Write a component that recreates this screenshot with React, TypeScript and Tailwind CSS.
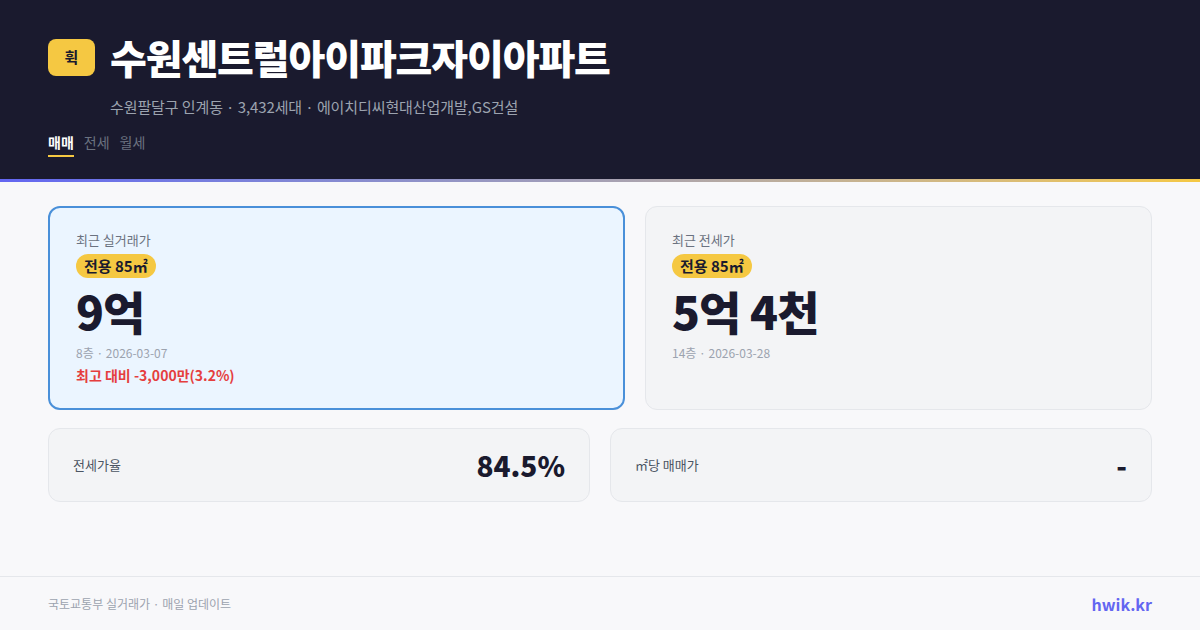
import React from 'react';

const font = { fontFamily: '"Noto Sans CJK KR", "Noto Sans", sans-serif' };

const tabs = ['매매', '전세', '월세'];

const App: React.FC = () => {
    return (
        <div className="w-[1200px] h-[630px] bg-[#f8f8fa] flex flex-col overflow-hidden" style={font}>
            {/* Header */}
            <header className="bg-[#1a1a2e] px-12 pt-[32px] h-[179px] shrink-0">
                <div className="flex items-center gap-[15px]">
                    <div className="w-[47px] h-[37px] rounded-[8px] bg-[#f5c842] flex items-center justify-center text-[15px] font-bold text-[#1a1a2e]">
                        휙
                    </div>
                    <h1 className="text-[40px] leading-[50px] font-extrabold text-white tracking-[-1.1px]">
                        수원센트럴아이파크자이아파트
                    </h1>
                </div>
                <div className="pl-[62px] mt-[14px] text-[15px] leading-[22px] text-[#9ca3af] tracking-[-0.1px]">
                    수원팔달구 인계동 · 3,432세대 · 에이치디씨현대산업개발,GS건설
                </div>
                <div className="flex gap-[10px] mt-[14px] text-[14px] leading-[20px]">
                    {tabs.map((t, i) => (
                        <div
                            key={t}
                            className={`pb-[3px] border-b-2 ${i === 0 ? 'text-white font-bold border-[#f5c842]' : 'text-[#6b7280] border-transparent'}`}
                        >
                            {t}
                        </div>
                    ))}
                </div>
            </header>
            <div className="h-[3px] shrink-0 bg-gradient-to-r from-[#6366f1] to-[#f5c842]" />

            {/* Body */}
            <main className="flex-1 px-12 pt-[24px]">
                <div className="grid grid-cols-[577px_507px] gap-5">
                    <div className="h-[204px] rounded-[12px] border-2 border-[#4a90d9] bg-[#ebf5ff] px-[26px] pt-[23px]">
                        <div className="text-[13px] text-[#6b7280] leading-[18px]">최근 실거래가</div>
                        <span className="inline-block mt-[5px] rounded-full bg-[#f5c842] px-[8px] text-[15px] leading-[24px] font-bold text-[#1a1a2e]">전용 85㎡</span>
                        <div className="text-[46px] leading-[64px] font-black text-[#1a1a2e] tracking-[-0.02em]">9억</div>
                        <div className="text-[12px] text-[#9ca3af] leading-[18px] mt-[2px]">8층 · 2026-03-07</div>
                        <div className="text-[14px] text-[#e53e3e] font-semibold leading-[22px] mt-[2px]">최고 대비 -3,000만(3.2%)</div>
                    </div>
                    <div className="h-[204px] rounded-[12px] border border-[#e5e7eb] bg-[#f3f4f6] px-[26px] pt-[24px]">
                        <div className="text-[13px] text-[#6b7280] leading-[18px]">최근 전세가</div>
                        <span className="inline-block mt-[5px] rounded-full bg-[#f5c842] px-[8px] text-[15px] leading-[24px] font-bold text-[#1a1a2e]">전용 85㎡</span>
                        <div className="text-[46px] leading-[64px] font-black text-[#1a1a2e] tracking-[-0.02em]">5억 4천</div>
                        <div className="text-[12px] text-[#9ca3af] leading-[18px] mt-[2px]">14층 · 2026-03-28</div>
                    </div>
                </div>
                <div className="grid grid-cols-2 gap-5 mt-[18px]">
                    <div className="h-[74px] rounded-[12px] border border-[#e5e7eb] bg-[#f3f4f6] px-[24px] flex items-center justify-between">
                        <span className="text-[13px] text-[#4b5563]">전세가율</span>
                        <span className="text-[28px] font-extrabold text-[#1a1a2e]">84.5%</span>
                    </div>
                    <div className="h-[74px] rounded-[12px] border border-[#e5e7eb] bg-[#f3f4f6] px-[24px] flex items-center justify-between">
                        <span className="text-[13px] text-[#4b5563]">㎡당 매매가</span>
                        <span className="text-[28px] font-extrabold text-[#1a1a2e]">-</span>
                    </div>
                </div>
            </main>

            {/* Footer */}
            <footer className="h-[54px] shrink-0 border-t border-[#e5e7eb] px-12 flex items-center justify-between">
                <span className="text-[12px] text-[#9ca3af]">국토교통부 실거래가 · 매일 업데이트</span>
                <span className="text-[16px] font-bold text-[#6366f1]">hwik.kr</span>
            </footer>
        </div>
    );
};

export default App;
